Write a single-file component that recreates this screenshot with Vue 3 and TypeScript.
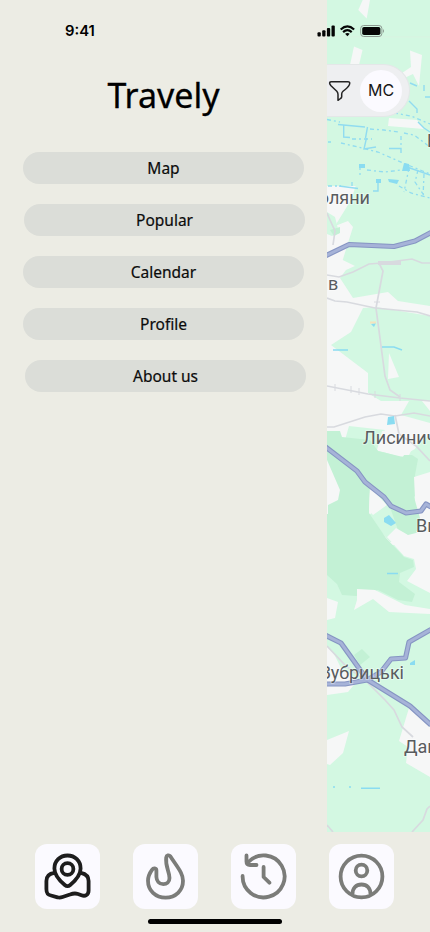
<script setup lang="ts">
import { ref } from 'vue'

type Label = { text: string; x: number; y: number; anchor: 'start' | 'end' }

const menu = [
  { text: 'Map', tone: 'base' },
  { text: 'Popular', tone: 'nudged' },
  { text: 'Calendar', tone: 'base' },
  { text: 'Profile', tone: 'base' },
  { text: 'About us', tone: 'wide' },
]

const active = ref('map')
const tabs = ['map', 'popular', 'history', 'profile']

const built: string[] = [
  'M362.7 0L358.3 10L366.7 18.5L370 0Z',
  'M354 46.5L362.5 50L359 65H350Z',
  'M410 50.5L422 55L419 86L413 74L400 80L402 73L411 67Z',
  'M389 118L417 120L424 129L388 126Z',
  'M327 186H430V545H327Z',
]
const fields: string[] = [
  'M356 185H430V306L398 301L388 292L353 298L340 278L346 270L355 266L342.700 260L353 227L348 221L335 226L351 200Z',
  'M363 308L376 307L430 316V401L412 401L381 401L368 393V373L331 345L351 332Z',
  'M327 212L335 217L339 233L332 236L327 234Z',
  'M409 401L422 401L430 411V423L401 415Z',
  'M349 426L385 430L378 451L404 455L415 449L418 443L430 435V474L415 478V540L390 542L367 516L372 513L369 488L345 440Z',
]
const suburb = 'M382 431L396 429L416 441L409 455L400 457L377 450Z'
const forest =
  'M327 431L340 431L342 437L370 440L378 451L403 457L404 455L412 455L418 459L415 475L418 492L414 497L420 518L419 530L408 535L398 530L391 510L370 488L369 513L386 538L404 557L413 560L414 567L400 573L399 582L415 594L412 602L398 600L378 590L356 596L342 595L337 584L327 575Z'
const clearings: string[] = [
  'M389 353L399 377L388 379Z',
  'M327 460L340 490L338 500L328 505V514H327Z',
  'M370 487L387 505L373 515L369 510Z',
  'M387 537L396 528L408 535L420 532L421 518L415 498L414 477L430 472V593L407 581L416 569L414 559L404 556Z',
  'M357 589L375 590L405 605L430 609V614L389 612L373 599L354 610L357 600Z',
  'M327 598L338 602L335 618L327 620Z',
  'M327 646L333 652L341 668L358 680L348 692L327 695Z',
  'M327 740L349 731L343 753L330 765L327 764Z',
  'M409 708L430 727V777L406 763L408 747L399 741Z',
]
const lanes: string[] = [
  'M327 275L339 277L353 272L369 264L382 263L412 259L422 263H430',
  'M379 263L383 271L376 308L385 376L390 390L400 397',
  'M327 386L368 394L400 398L430 401',
  'M327 298L335 301L347 302L375 308L417 312L430 316',
  'M327 427H334L365 417L381 414L395 416L414 413L430 416',
  'M395 415L399 434L416 446L430 461',
  'M327 213L330 220L335 231L333 245',
  'M327 646L346 666L366 681L385 700L394 710L402 727L413 737',
  'M412 832L423 820L427 809L430 806',
  'M327 825L333 832',
]
const highways: string[] = [
  'M325 256L349 244.500L394 246.500L415 241L431 232.500',
  'M325 446.500L357 471L365 482L384 497L391 506L406 513L421 511L426 504L431 507',
  'M325 635L341 643L367 679.500L410 706L431 725',
  'M431 629.500L409 642L405.500 658L391 659L381 672L367 680L345 684H325',
]
const canals: string[] = [
  'M338 124.500L365 127',
  'M343.700 125V137L350 137.500',
  'M367.500 127L365.500 138M366.500 138L364 149L376 147',
  'M389 148.500H401V153',
  'M339 186L358 188.500',
  'M378 181V191H373',
  'M409 101L417 109V113',
  'M410 83L417 86M425 97H430',
  'M418 122L424 128L430 132',
  'M424 85V91M407 167L430 175',
]
const ditches: string[] = [
  'M327 119.500L340 122M328 142H331',
  'M370 129L384 130L398 132',
  'M341 143L358 147L378 152L403 163L430 174',
  'M328 186H341',
  'M360 166V178M352 182V187',
  'M367 170L385 172L401 170',
  'M409 168L404 192M418 170L415 182L425 197M424 174L423 198',
  'M399 186L411 193L430 198M352 139L372 139',
  'M394 113L411 116L430 124',
  'M404 133L414 135L430 147M401 136V145',
]
const labels: Label[] = [
  { text: 'оляни', x: 370, y: 204, anchor: 'end' },
  { text: 'в', x: 328, y: 290, anchor: 'start' },
  { text: 'Лисиничі', x: 363, y: 444, anchor: 'start' },
  { text: 'Винники', x: 416, y: 532, anchor: 'start' },
  { text: 'Зубрицькі', x: 404, y: 678.5, anchor: 'end' },
  { text: 'Давидів', x: 404, y: 753, anchor: 'start' },
  { text: 'В', x: 427, y: 146.500, anchor: 'start' },
]
</script>

<template>
  <div class="screen">
    <div class="main">
      <aside class="drawer">
        <h1>Travely</h1>
        <nav class="menu">
          <button v-for="item in menu" :key="item.text" :class="['entry', item.tone]">
            <span>{{ item.text }}</span>
          </button>
        </nav>
      </aside>
      <section class="map">
        <svg class="terrain" viewBox="327 0 103 832" width="103" height="832">
          <rect x="327" width="103" height="832" fill="#d3f8e2" />
          <path d="M327 37H430" stroke="#d9f3e1" />
          <path v-for="d in built" :key="d" :d="d" fill="#f6f7f7" />
          <path v-for="d in fields" :key="d" :d="d" fill="#d3f8e2" />
          <path :d="suburb" fill="#f6f7f7" />
          <path :d="forest" fill="#c3f1d5" />
          <path d="M354 655L362 649L370 657L360 665ZM330 230L340 227V233L334 236ZM404 530L415 530L418 534L408 537Z" fill="#c3f1d5" />
          <path v-for="d in clearings" :key="d" :d="d" fill="#f6f7f7" />
          <g fill="none" stroke="#d8dadf" stroke-width="1.7">
            <path v-for="d in lanes" :key="d" :d="d" />
            <path d="M378 263H401" stroke-width="4" />
            <path d="M335 384V391M351 386V393M359 388V395M375 391V398M400 394V401M374 302H380" stroke-width="1" />
          </g>
          <g fill="none" stroke="#91dcf0" stroke-width="1.4">
            <path v-for="d in canals" :key="d" :d="d" />
          </g>
          <g fill="none" stroke="#91dcf0" stroke-width="1.3" stroke-dasharray="4 3 2 3">
            <path v-for="d in ditches" :key="d" :d="d" />
          </g>
          <path d="M404 163L409 164L410 171H402ZM388 179L399 180L397 184L389 182ZM376 179H381V183H376ZM359 164H365V168H359ZM388 417L394 416L395 424L387 425ZM384 518L389 515L396 523L391 526L384 522ZM410 663L415 660V665H410ZM371 324L376 323L374 327Z" fill="#8adcf1" />
          <path d="M370 322.500H376" stroke="#f4e3bd" stroke-width="2" />
          <path d="M333 350H348M382 347H394L402 350M387 573.500H398M361 788.300H380M333 787H335M349 787H351" fill="none" stroke="#8adcf1" stroke-width="1.6" />
          <g fill="none" stroke-linejoin="round">
            <path v-for="d in highways" :key="d" :d="d" stroke="#8695c3" stroke-width="5.2" />
            <path v-for="d in highways" :key="d + 'i'" :d="d" stroke="#a6b3d8" stroke-width="3" />
          </g>
          <text v-for="l in labels" :key="l.text" :x="l.x" :y="l.y" :text-anchor="l.anchor" class="place">{{ l.text }}</text>
        </svg>
        <div class="filters">
          <svg width="24" height="24" viewBox="0 0 24 24" fill="none" stroke="#232323" stroke-width="1.5" stroke-linejoin="round">
            <path d="M3 2.800H20Q22 2.800 21.700 4.500C21.500 7.500 19 9 14.800 12.500Q13.700 13.500 13.700 15V17.700Q13.700 18.800 12.500 19.500L10 21.300V15.500Q10 13.700 8.800 12.300L3 6.800Q.200 3 3 2.800Z" />
          </svg>
          <span class="avatar">MC</span>
        </div>
      </section>
    </div>

    <footer class="tabs">
      <button v-for="tab in tabs" :key="tab" :class="['tab', { active: active === tab }]" @click="active = tab">
        <svg width="65" height="65" viewBox="0 0 65 65" fill="none" stroke="currentColor" stroke-width="3.800" stroke-linecap="round" stroke-linejoin="round">
          <template v-if="tab === 'map'">
            <path d="M32.500 11.500C25 11.500 19.400 17 19.400 24.500C19.400 32 25 37 29.800 41Q32.500 43.200 35.200 41C40 37 45.600 32 45.600 24.500C45.600 17 40 11.500 32.500 11.500Z" />
            <circle cx="32.500" cy="25" r="5.900" />
            <path d="M19.500 28.800C14 29.500 11.400 32 11.400 37V45C11.400 49.500 12.500 50.700 16 51.500L22.500 53.300Q24.800 54 27.500 53L35 50.500Q39.500 48.800 43 50L46.500 51.300C50.500 52.800 53.600 50.500 53.600 46.500V37C53.600 32.500 51.500 30 46 28.800" />
          </template>
          <path v-else-if="tab === 'popular'" d="M37.300 12.200C36 10.700 33.500 11.200 33.200 13.500C32.200 23 36.500 27.500 36.500 34C36.500 38 33.700 40.200 30.300 40.200C26 40.200 23.600 37 23.400 33V26.500C23.400 24 20.400 23.800 19 25.800C16.300 29.500 15 32.500 15 36.700C15 46.500 22.500 53.600 32.600 53.600C42.800 53.600 50 46.500 50 36.800C50 29 44.500 23.500 37.300 12.200Z" />
          <template v-else-if="tab === 'history'">
            <path d="M11.600 32A21 21 0 1 0 17.300 18" />
            <path d="M15.500 11.500V17.500Q15.500 21 19 21H25.500M32.600 23V33L38.400 38.700" />
          </template>
          <template v-else>
            <circle cx="32.500" cy="32.500" r="20.900" />
            <circle cx="32.500" cy="26.500" r="5.800" />
            <path d="M23.500 50C23.500 44 27 40.500 32.500 40.500S41.500 44 41.500 50" stroke-linecap="butt" />
          </template>
        </svg>
      </button>
      <i class="home"></i>
    </footer>

    <header class="status">
      <time>9:41</time>
      <svg width="68" height="14" viewBox="318 24 68 14" fill="#050505">
        <rect x="317.500" y="32.300" width="3.300" height="4.200" rx="1" />
        <rect x="322.200" y="30.300" width="3.300" height="6.200" rx="1" />
        <rect x="326.900" y="28" width="3.300" height="8.500" rx="1" />
        <rect x="331.500" y="25.500" width="3.300" height="11" rx="1" />
        <g fill="none" stroke="#050505" stroke-width="2.200">
          <path d="M340.700 29.500Q347.400 23.300 354.100 29.500M343.100 32.100Q347.400 28.200 351.700 32.100" />
        </g>
        <path d="M345.100 33.800Q347.400 32.200 349.700 33.800L347.400 36.200Z" />
        <rect x="360.700" y="25.500" width="21.200" height="11" rx="3" fill="none" stroke="#8c9991" />
        <rect x="362.200" y="27" width="18.200" height="8" rx="1.800" />
        <path d="M383 29V33Q385 31 383 29" fill="#8c9991" />
      </svg>
    </header>
  </div>
</template>

<style>
body { margin: 0; }
</style>

<style scoped>
.screen {
  position: relative;
  width: 430px;
  height: 932px;
  overflow: hidden;
  background: #ecece4;
  font-family: Inter, "Liberation Sans", sans-serif;
}
button { border: 0; padding: 0; font: inherit; cursor: pointer; }
.main { display: flex; height: 832px; }
.drawer {
  width: 327px;
  box-sizing: border-box;
  padding-top: 72px;
  font-family: "Noto Sans", sans-serif;
}
h1 {
  margin: 0;
  height: 80px;
  font-size: 34px;
  line-height: 46px;
  font-weight: 400;
  text-align: center;
  -webkit-text-stroke: 0.3px #000;
}
.menu { display: flex; flex-direction: column; gap: 20px; padding-left: 23px; }
.entry {
  width: 281px;
  height: 32px;
  border-radius: 16px;
  background: #dbddd8;
  color: #0b0b0b;
  font-size: 15.5px;
  font-weight: 400;
  line-height: 32px;
  -webkit-text-stroke: 0.2px #0b0b0b;
}
.nudged { margin-left: 1px; }
.wide { margin-left: 2px; }
.map { position: relative; width: 103px; height: 832px; overflow: hidden; }
.terrain { display: block; }
.place {
  font: 18px Roboto, sans-serif;
  fill: #595c5f;
  stroke: #fff;
  stroke-width: 2px;
  stroke-opacity: .4;
  paint-order: stroke;
}
.filters {
  position: absolute;
  top: 64px;
  left: 0;
  display: flex;
  align-items: center;
  gap: 8px;
  box-sizing: border-box;
  width: 83px;
  height: 53px;
  padding-left: 1px;
  border: 1px solid #e4e7e8;
  border-left: 0;
  border-radius: 0 27px 27px 0;
  background: #eeeff1;
}
.avatar {
  width: 42px;
  height: 42px;
  border-radius: 50%;
  background: #fbfaff;
  color: #161616;
  font-size: 16px;
  font-weight: 400;
  line-height: 41px;
  text-align: center;
}
.tabs {
  position: relative;
  display: flex;
  gap: 33px;
  box-sizing: border-box;
  height: 100px;
  padding: 12px 0 0 35px;
}
.tab {
  width: 65px;
  height: 65px;
  border-radius: 12px;
  background: #fbfaff;
  color: #7b7c79;
}
.tab svg { display: block; }
.tab.active { color: #1d1d1d; }
.home {
  position: absolute;
  left: 148px;
  top: 87px;
  width: 134px;
  height: 5px;
  border-radius: 3px;
  background: #000;
}
.status {
  position: absolute;
  top: 24px;
  left: 65px;
  display: flex;
  justify-content: space-between;
  width: 321px;
  height: 14px;
}
.status svg { overflow: visible; }
time { font-size: 14.8px; font-weight: 600; line-height: 14px; }
</style>
